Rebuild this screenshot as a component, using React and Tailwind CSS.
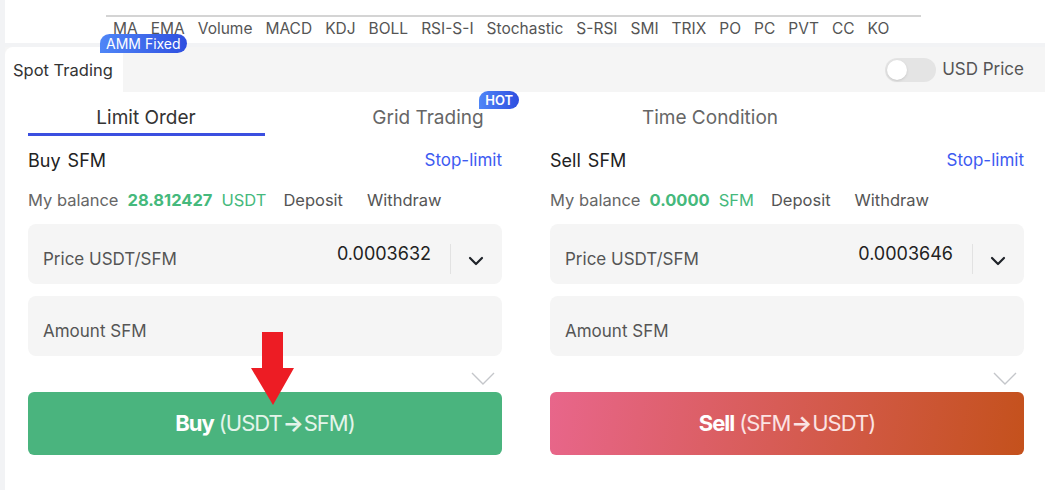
import React from "react";

const indicators = [
  "MA", "EMA", "Volume", "MACD", "KDJ", "BOLL", "RSI-S-I", "Stochastic",
  "S-RSI", "SMI", "TRIX", "PO", "PC", "PVT", "CC", "KO",
];

const Toggle = () => (
  <div className="w-[51px] h-[24px] rounded-full bg-[#e4e4e4] p-[2px] flex items-center">
    <div className="w-[20px] h-[20px] rounded-full bg-white shadow-sm" />
  </div>
);

const SmallChevron = () => (
  <svg width="16" height="10" viewBox="0 0 16 10" fill="none">
    <polyline points="2,2 8,8 14,2" stroke="#1f2329" strokeWidth="2.2" strokeLinecap="round" strokeLinejoin="round" />
  </svg>
);

const ThinChevron = () => (
  <svg width="24" height="14" viewBox="0 0 24 14" fill="none">
    <polyline points="1,1 12,12 23,1" stroke="#c4c6ca" strokeWidth="1.4" />
  </svg>
);

const OrderColumn = ({ side, coin, balance, balanceCoin, price, button }) => (
  <div className="flex flex-col">
    <div className="flex items-center justify-between h-[24px] mt-[12px]">
      <span className="text-[18px] text-[#222]">
        {side} <span className="ml-[2px]">{coin}</span>
      </span>
      <span className="text-[17px] text-[#3d5af1] pt-[2px]">Stop-limit</span>
    </div>
    <div className="flex items-center h-[24px] mt-[16px] text-[16.5px]">
      <span className="text-[#666]">My balance</span>
      <span className="ml-[9px] font-bold text-[#45b97c]">{balance}</span>
      <span className="ml-[9px] text-[#45b97c]">{balanceCoin}</span>
      <span className="ml-[17px] text-[#555]">Deposit</span>
      <span className="ml-[24px] text-[#555]">Withdraw</span>
    </div>
    <div className="mt-[12px] h-[60px] rounded-lg bg-[#f5f5f5] flex items-center pl-[15px] pr-[18px]">
      <span className="pt-[12px] text-[17px] text-[#555]">Price USDT/SFM</span>
      <span className="ml-auto text-[18px] text-[#222] mb-[1px]">{price}</span>
      <div className="ml-[19px] w-px h-[30px] bg-[#e2e2e2] mt-[10px]" />
      <div className="ml-[17px] mt-[14px]">
        <SmallChevron />
      </div>
    </div>
    <div className="mt-[12px] h-[60px] rounded-lg bg-[#f5f5f5] flex items-center pl-[15px]">
      <span className="pt-[12px] text-[17px] text-[#555]">Amount SFM</span>
    </div>
    <div className="h-[36px] flex justify-end pr-[7px] pt-[16px]">
      <ThinChevron />
    </div>
    {button}
  </div>
);

const App = () => {
  return (
    <div
      className="relative min-h-[490px] bg-[#f2f3f5] pl-[5px] overflow-hidden"
      style={{ fontFamily: "Inter, 'Noto Sans', sans-serif" }}
    >
      <div className="relative bg-white h-[43px]">
        <div className="absolute left-[101px] top-[15px] w-[815px] h-[2px] bg-[#d4d4d4]" />
        <div className="flex gap-[13px] pl-[108px] pt-[19px] text-[15.5px] text-[#555] leading-[20px]">
          {indicators.map((name) => (
            <span key={name}>{name}</span>
          ))}
        </div>
        <div className="absolute left-[95px] top-[34px] h-[19px] px-[6px] rounded-t-full rounded-br-full bg-[linear-gradient(90deg,#4f86f7,#2f4fe0)] text-white text-[14px] leading-[19px] z-10">
          AMM Fixed
        </div>
      </div>

      <div className="mt-[4px] bg-white rounded-tl-lg">
        <div className="flex h-[45px] bg-[#f5f5f5]">
          <div className="w-[118px] bg-white rounded-tl-lg flex items-center pl-[8px] pt-[2px] text-[16.5px] text-[#333]">
            Spot Trading
          </div>
          <div className="ml-auto flex items-center pr-[21px] gap-[6px]">
            <Toggle />
            <span className="text-[17px] text-[#555]">USD Price</span>
          </div>
        </div>

        <div className="flex pt-[14px]">
          <div className="w-[282px] flex flex-col items-center">
            <span className="text-[19px] text-[#333] leading-[24px]">Limit Order</span>
            <div className="mt-[3px] w-[237px] h-[3px] bg-[#3b4fe0]" />
          </div>
          <div className="w-[282px] flex flex-col items-center">
            <span className="relative text-[19px] text-[#666] leading-[24px]">
              Grid Trading
              <span className="absolute left-[107px] top-[-15px] h-[18px] px-[6px] rounded-t-full rounded-br-full bg-[linear-gradient(90deg,#4f86f7,#2f4fe0)] text-white text-[13px] leading-[18px] font-semibold">
                HOT
              </span>
            </span>
          </div>
          <div className="w-[282px] flex flex-col items-center">
            <span className="text-[19px] text-[#666] leading-[24px]">Time Condition</span>
          </div>
        </div>

        <div className="grid grid-cols-2 gap-[48px] pl-[23px] pr-[21px] pb-[35px]">
          <OrderColumn
            side="Buy"
            coin="SFM"
            balance="28.812427"
            balanceCoin="USDT"
            price="0.0003632"
            button={
              <div className="h-[63px] rounded-md bg-[#4ab47e] flex items-center justify-center text-[22px] tracking-[-1px]">
                <span className="font-bold text-white">Buy</span>
                <span className="ml-[5px] text-[#e3f4ea]">
                  (USDT<span className="font-bold mx-[1px]">→</span>SFM)
                </span>
              </div>
            }
          />
          <OrderColumn
            side="Sell"
            coin="SFM"
            balance="0.0000"
            balanceCoin="SFM"
            price="0.0003646"
            button={
              <div className="h-[63px] rounded-md bg-[linear-gradient(100deg,#e8668b,#c4511c)] flex items-center justify-center text-[22px] tracking-[-1px]">
                <span className="font-bold text-white">Sell</span>
                <span className="ml-[5px] text-[#fbe3e3]">
                  (SFM<span className="font-bold mx-[1px]">→</span>USDT)
                </span>
              </div>
            }
          />
        </div>
      </div>

      <svg className="absolute left-[251px] top-[332px]" width="44" height="74" viewBox="0 0 44 74">
        <polygon points="11,0 32,0 32,36 43,36 22,73 0,36 11,36" fill="#ed1c24" />
      </svg>
    </div>
  );
};

export default App;
